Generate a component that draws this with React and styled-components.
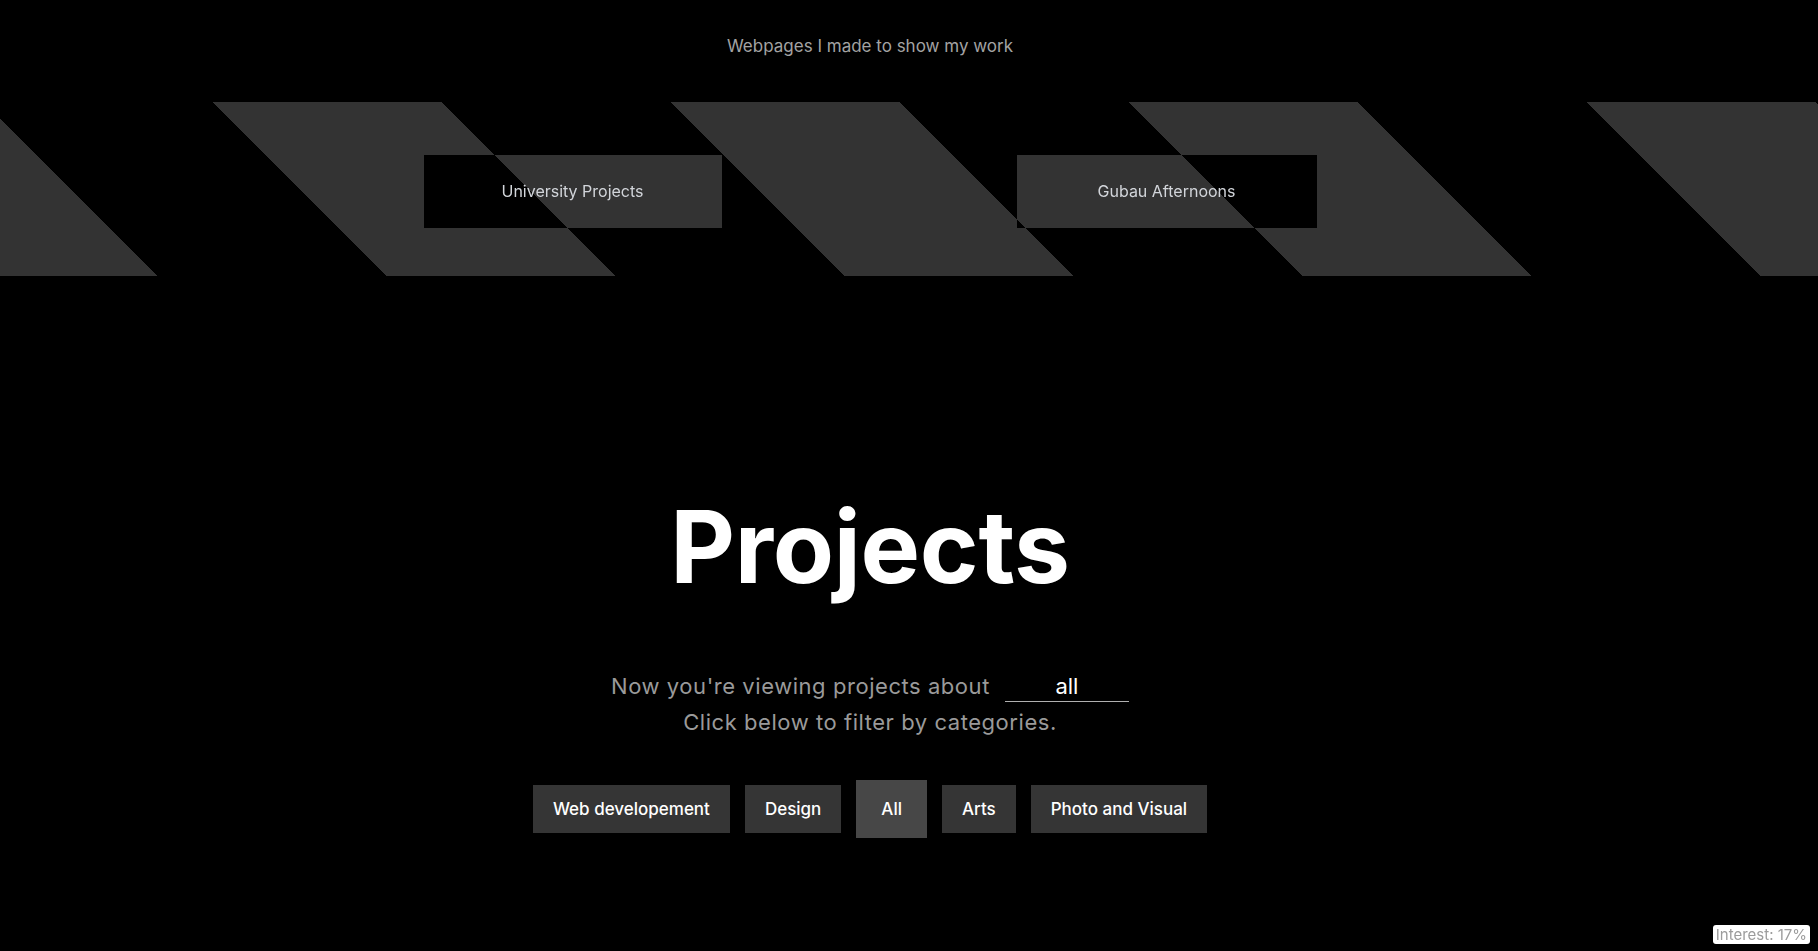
import React from "react";
import styled, { createGlobalStyle } from "styled-components";

const GlobalStyle = createGlobalStyle`
  html, body {
    margin: 0;
    padding: 0;
    background: #000;
  }
  body {
    font-family: Inter, "Noto Sans", sans-serif;
    color: #fff;
  }
`;

const Page = styled.div`
  min-height: 951px;
  background: #000;
  display: flex;
  flex-direction: column;
`;

const Column = styled.div`
  width: calc(100% - 78px);
  display: flex;
  flex-direction: column;
  align-items: center;
`;

const Tagline = styled.p`
  margin: 36px 0 0;
  font-size: 17px;
  line-height: 20px;
  color: #a3a3a3;
`;

const Band = styled.div`
  margin-top: 46px;
  height: 174px;
  width: 100%;
  isolation: isolate;
  background: repeating-linear-gradient(
    45deg,
    #333 0px,
    #333 111.7px,
    #000 111.7px,
    #000 273.6px,
    #333 273.6px,
    #333 323.85px
  );
`;

const BandRow = styled.div`
  width: calc(100% - 78px);
  height: 100%;
  display: flex;
  align-items: center;
  justify-content: center;
  gap: 295px;
  padding-top: 5px;
  box-sizing: border-box;
`;

const LinkBox = styled.a`
  position: relative;
  width: ${(p) => p.$w}px;
  height: 73px;
  display: flex;
  align-items: center;
  justify-content: center;
  text-decoration: none;
  font-size: 16px;
  color: #d2d5da;
  cursor: pointer;
  &::before {
    content: "";
    position: absolute;
    inset: 0;
    background: #333;
    mix-blend-mode: difference;
  }
`;

const LinkText = styled.span`
  position: relative;
  margin-top: -2px;
`;

const Title = styled.h1`
  margin: 221px 0 0;
  font-size: 100px;
  line-height: 100px;
  font-weight: 700;
  letter-spacing: -0.3px;
  color: #fff;
`;

const Intro = styled.div`
  margin-top: 71px;
  display: flex;
  flex-direction: column;
  align-items: center;
  font-size: 22px;
  letter-spacing: 0.55px;
  line-height: 36px;
  color: #9a9a9a;
`;

const IntroLine = styled.div`
  display: flex;
  align-items: baseline;
`;

const FilterValue = styled.span`
  display: inline-block;
  width: 124px;
  margin-left: 15px;
  text-align: center;
  color: #fff;
  font-size: 22px;
  letter-spacing: 0;
  line-height: 30px;
  border-bottom: 1px solid #b0b0b0;
`;

const Filters = styled.div`
  margin-top: 40px;
  height: 58px;
  display: flex;
  align-items: center;
  gap: 15px;
`;

const FilterButton = styled.button`
  font-family: inherit;
  border: none;
  color: #fff;
  font-size: 17px;
  font-weight: 500;
  height: ${(p) => (p.$active ? 58 : 48)}px;
  padding: 0 ${(p) => (p.$active ? 25 : 20)}px;
  background: ${(p) => (p.$active ? "#474747" : "#353535")};
  cursor: pointer;
`;

const Badge = styled.div`
  position: fixed;
  right: 8px;
  bottom: 7px;
  background: #fff;
  color: #9c9c9c;
  font-size: 15px;
  line-height: 19px;
  padding: 0 3px;
  border-radius: 3px;
`;

const categories = [
  "Web developement",
  "Design",
  "All",
  "Arts",
  "Photo and Visual",
];

export default function App() {
  return (
    <Page>
      <GlobalStyle />
      <Column>
        <Tagline>Webpages I made to show my work</Tagline>
      </Column>
      <Band>
        <BandRow>
          <LinkBox $w={298}>
            <LinkText>University Projects</LinkText>
          </LinkBox>
          <LinkBox $w={300}>
            <LinkText>Gubau Afternoons</LinkText>
          </LinkBox>
        </BandRow>
      </Band>
      <Column>
        <Title>Projects</Title>
        <Intro>
          <IntroLine>
            Now you're viewing projects about
            <FilterValue>all</FilterValue>
          </IntroLine>
          <IntroLine>Click below to filter by categories.</IntroLine>
        </Intro>
        <Filters>
          {categories.map((c) => (
            <FilterButton key={c} $active={c === "All"}>
              {c}
            </FilterButton>
          ))}
        </Filters>
      </Column>
      <Badge>Interest: 17%</Badge>
    </Page>
  );
}
